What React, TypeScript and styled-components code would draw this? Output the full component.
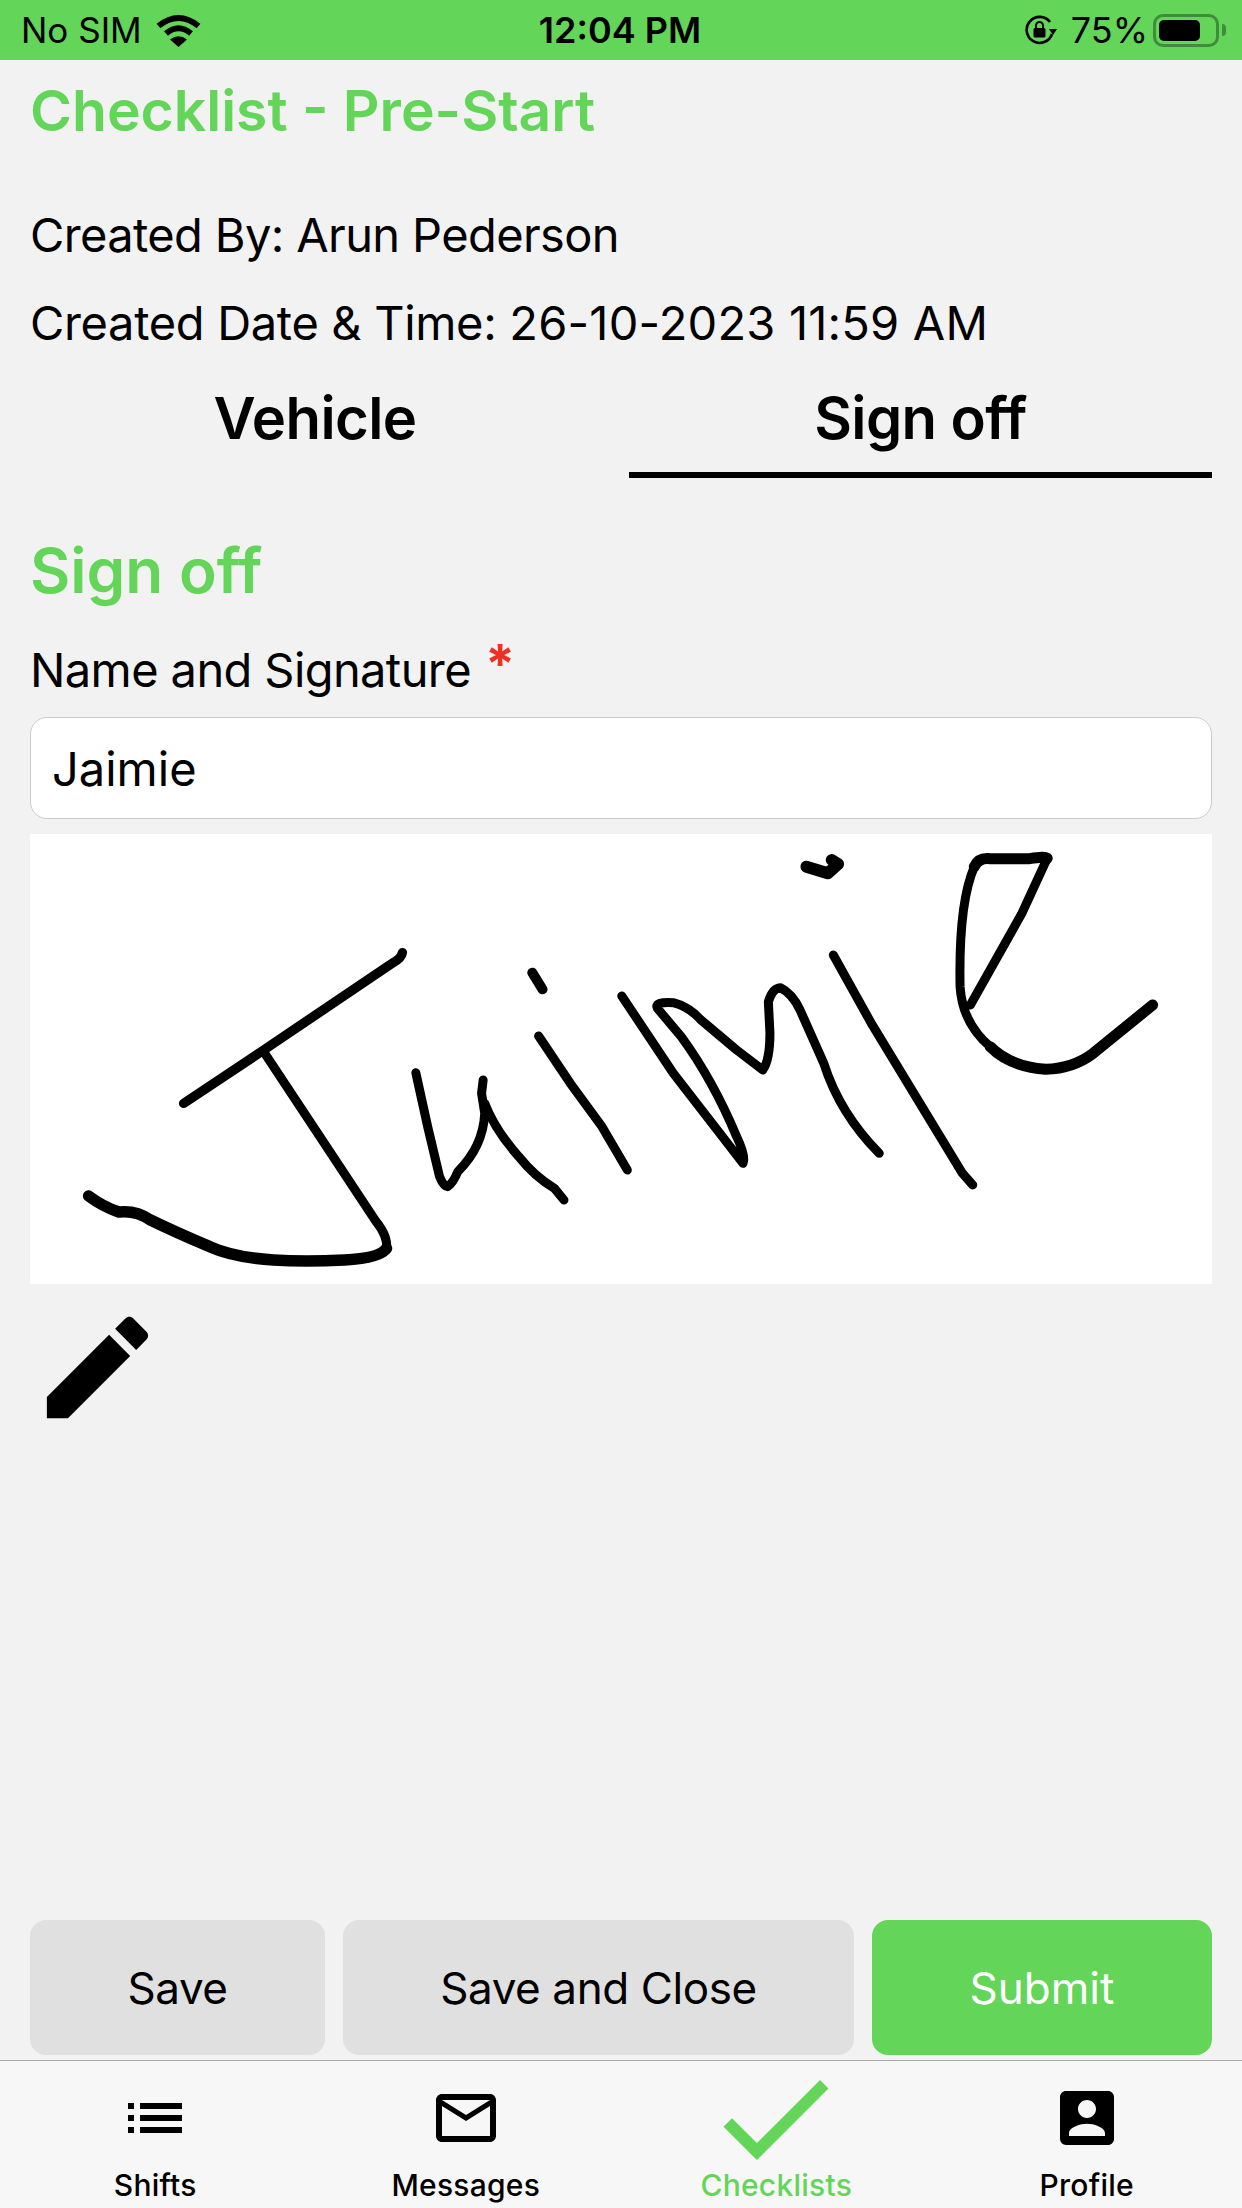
import React from 'react';
import styled, { createGlobalStyle } from 'styled-components';

const GREEN = '#63d558';

const GlobalStyle = createGlobalStyle`
    html, body {
        margin: 0;
        padding: 0;
        background: #f2f2f2;
    }
    * {
        box-sizing: border-box;
    }
`;

const Screen = styled.div`
    width: 1242px;
    height: 2208px;
    display: flex;
    flex-direction: column;
    overflow: hidden;
    background: #f2f2f2;
    color: #000;
    font-family: Inter, "Liberation Sans", sans-serif;
`;

const StatusBar = styled.div`
    height: 60px;
    flex: none;
    background: ${GREEN};
    display: grid;
    grid-template-columns: 1fr auto 1fr;
    align-items: center;
    padding: 0 23px 0 21px;
    font-size: 35px;
    line-height: 60px;
`;

const StatusLeft = styled.div`
    display: flex;
    align-items: center;
    gap: 14px;
`;

const StatusRight = styled.div`
    display: flex;
    align-items: center;
    justify-content: flex-end;
    gap: 5px;
    font-size: 36px;
`;

const Clock = styled.div`
    font-weight: 600;
    font-size: 36px;
`;

const LockSlot = styled.div`
    display: flex;
    margin-right: 9px;
`;

const Battery = styled.div`
    position: relative;
    width: 66px;
    height: 33px;
    border: 3px solid #3f8c3a;
    border-radius: 10px;
    padding: 3px;
    &::after {
        content: '';
        position: absolute;
        right: -10px;
        top: 7px;
        width: 4px;
        height: 12px;
        background: #3f8c3a;
        border-radius: 0 4px 4px 0;
    }
`;

const BatteryFill = styled.div`
    width: 41px;
    height: 21px;
    background: #000;
    border-radius: 5px;
`;

const Content = styled.div`
    flex: 1;
    display: flex;
    flex-direction: column;
    padding: 0 30px;
    min-height: 0;
`;

const Title = styled.h1`
    margin: 15px 0 0;
    font-size: 57px;
    line-height: 72px;
    font-weight: 600;
    color: ${GREEN};
`;

const MetaLine = styled.div<{ $top: number; $tracking: number }>`
    font-size: 47px;
    line-height: 60px;
    margin-top: ${(props) => props.$top}px;
    letter-spacing: ${(props) => props.$tracking}px;
`;

const DateValue = styled.span`
    letter-spacing: 0.2px;
`;

const Tabs = styled.div`
    display: grid;
    grid-template-columns: 570px 583px;
    gap: 29px;
    margin-top: 26px;
`;

const Tab = styled.div<{ $active?: boolean }>`
    height: 99px;
    text-align: center;
    font-size: 58px;
    line-height: 78px;
    font-weight: 600;
    letter-spacing: -0.6px;
    border-bottom: 6px solid ${(props) => (props.$active ? '#000' : 'transparent')};
`;

const SectionTitle = styled.h2`
    margin: 55px 0 0;
    font-size: 62px;
    line-height: 76px;
    font-weight: 600;
    color: ${GREEN};
`;

const FieldLabel = styled.div`
    margin-top: 32px;
    font-size: 47px;
    line-height: 58px;
    letter-spacing: -0.6px;
`;

const Required = styled.span`
    color: #ee3124;
    font-weight: 700;
    font-size: 54px;
    line-height: 0;
    margin-left: 14px;
    position: relative;
    top: -4px;
`;

const NameInput = styled.input`
    display: block;
    width: 100%;
    height: 102px;
    margin-top: 18px;
    padding: 0 21px;
    background: #fff;
    border: 1px solid #ccc;
    border-radius: 17px;
    color: #000;
    font-family: inherit;
    font-size: 47px;
    outline: none;
`;

const SignaturePanel = styled.div`
    height: 450px;
    margin-top: 15px;
    background: #fff;
`;

const SignatureSvg = styled.svg`
    display: block;
    width: 100%;
    height: 100%;
`;

const Ink = styled.path<{ $weight: number }>`
    fill: none;
    stroke: #000;
    stroke-width: ${(props) => props.$weight}px;
    stroke-linecap: round;
    stroke-linejoin: round;
    vector-effect: non-scaling-stroke;
`;

const EditIcon = styled.svg`
    display: block;
    width: 135px;
    height: 135px;
    margin-top: 16px;
    flex: none;
`;

const Actions = styled.div`
    margin-top: auto;
    margin-bottom: 5px;
    display: grid;
    grid-template-columns: 295px 511px 340px;
    gap: 18px;
`;

const ActionButton = styled.button<{ $primary?: boolean }>`
    height: 135px;
    border: none;
    border-radius: 16px;
    background: ${(props) => (props.$primary ? GREEN : '#e0e0e0')};
    color: ${(props) => (props.$primary ? '#fff' : '#000')};
    font-family: inherit;
    font-size: 44px;
    letter-spacing: ${(props) => (props.$primary ? '0' : '-0.4px')};
    padding: 0;
`;

const TabBar = styled.div`
    height: 148px;
    flex: none;
    display: grid;
    grid-template-columns: repeat(4, 1fr);
    background: #f7f7f7;
    border-top: 1px solid #a9a9a9;
`;

const NavItem = styled.div<{ $active?: boolean }>`
    display: flex;
    flex-direction: column;
    align-items: center;
    padding-top: 21px;
    color: ${(props) => (props.$active ? GREEN : '#000')};
`;

const IconSlot = styled.div`
    width: 72px;
    height: 72px;
    display: flex;
    align-items: center;
    justify-content: center;
`;

const NavIcon = styled.svg`
    display: block;
    width: 72px;
    height: 72px;
    flex: none;
    fill: currentColor;
`;

const CheckIcon = styled.svg`
    display: block;
    width: 106px;
    height: 80px;
    flex: none;
    margin-top: 4px;
    fill: currentColor;
`;

const NavLabel = styled.div`
    margin-top: 13px;
    font-size: 30px;
    line-height: 36px;
    font-weight: 500;
    letter-spacing: 0.25px;
`;

const navItems = [
    { label: 'Shifts', path: 'M3 13h2v-2H3v2zm0 4h2v-2H3v2zm0-8h2V7H3v2zm4 4h14v-2H7v2zm0 4h14v-2H7v2zM7 7v2h14V7H7z' },
    { label: 'Messages', path: 'M20 4H4c-1.1 0-2 .9-2 2v12c0 1.1.9 2 2 2h16c1.1 0 2-.9 2-2V6c0-1.1-.9-2-2-2zm0 14H4V8l8 5 8-5v10zm-8-7L4 6h16l-8 5z' },
    { label: 'Checklists', path: '' },
    { label: 'Profile', path: 'M3 5v14a2 2 0 002 2h14c1.1 0 2-.9 2-2V5c0-1.1-.9-2-2-2H5c-1.11 0-2 .9-2 2zm12 4c0 1.66-1.34 3-3 3s-3-1.34-3-3 1.34-3 3-3 3 1.34 3 3zm-9 8c0-2 4-3.1 6-3.1s6 1.1 6 3.1v1H6v-1z' },
];

// traced by hand over the signature, viewBox is stretched to fit the panel
const signatureStrokes = [
    { w: 9.5, d: 'M232 850 L330 695 L495 430 Q507 415 508 398' },
    { w: 9, d: 'M333 695 L475 1205 Q490 1250 488 1285' },
    { w: 11.5, d: 'M112 1128 Q130 1160 150 1176 Q172 1170 190 1200 Q225 1240 265 1280 Q295 1312 345 1320 Q385 1326 435 1320 Q480 1314 488 1285' },
    { w: 9, d: 'M525 758 L540 920 L555 1070 Q560 1100 565 1100 Q572 1090 578 1055 Q610 980 612 880 L608 820 L610 780' },
    { w: 9, d: 'M612 850 Q625 930 655 1010 Q675 1070 700 1105 L712 1140' },
    { w: 10, d: 'M672 458 L685 508' },
    { w: 9, d: 'M680 648 L720 790 L760 920 L792 1050' },
    { w: 9, d: 'M785 528 L850 760 L938 1030 Q942 1010 930 950 Q900 780 860 650 L830 565 Q825 545 850 548 Q870 560 885 600 L930 690 L963 750 Q972 720 972 640 L970 545 Q975 505 985 503 Q1000 520 1010 570 L1040 730 Q1060 880 1110 1000' },
    { w: 12, d: 'M1018 140 L1045 160 L1058 132 L1050 120' },
    { w: 9, d: 'M1052 405 L1100 610 L1215 1060 L1228 1095' },
    { w: 9, d: 'M1225 555 L1290 280 L1322 115' },
    { w: 11, d: 'M1322 115 Q1320 108 1300 116 L1250 116 Q1235 112 1230 140' },
    { w: 9, d: 'M1230 140 Q1210 250 1212 500 Q1215 610 1250 680' },
    { w: 11, d: 'M1250 680 Q1275 740 1320 748 Q1355 745 1380 700 L1455 555' },
];

const WifiIcon = () => (
    <svg width="45" height="33" viewBox="0 0 45 33">
        <path d="M2.5 12 Q22.5 -4 42.5 12" fill="none" stroke="#000" strokeWidth="6" />
        <path d="M10 19.5 Q22.5 9 35 19.5" fill="none" stroke="#000" strokeWidth="6" />
        <path d="M14 25.5 Q22.5 19 31 25.5 L22.5 33 Z" fill="#000" />
    </svg>
);

const RotationLockIcon = () => (
    <svg width="32" height="30" viewBox="0 0 32 30">
        <path d="M27 19 A13 13 0 1 1 25 7" fill="none" stroke="#000" strokeWidth="2.6" />
        <path d="M24 14 L32 14 L28 20 Z" fill="#000" />
        <rect x="8.5" y="13" width="12" height="9.5" rx="1.5" fill="#000" />
        <path d="M11 13 V10.5 a3.5 3.5 0 0 1 7 0 V13" fill="none" stroke="#000" strokeWidth="2" />
    </svg>
);

const App: React.FC = () => {
    return (
        <Screen>
            <GlobalStyle />
            <StatusBar>
                <StatusLeft>
                    <span>No SIM</span>
                    <WifiIcon />
                </StatusLeft>
                <Clock>12:04 PM</Clock>
                <StatusRight>
                    <LockSlot>
                        <RotationLockIcon />
                    </LockSlot>
                    <span>75%</span>
                    <Battery>
                        <BatteryFill />
                    </Battery>
                </StatusRight>
            </StatusBar>
            <Content>
                <Title>Checklist - Pre-Start</Title>
                <MetaLine $top={58} $tracking={-0.62}>Created By: Arun Pederson</MetaLine>
                <MetaLine $top={28} $tracking={-0.33}>
                    Created Date &amp; Time: <DateValue>26-10-2023 11:59 AM</DateValue>
                </MetaLine>
                <Tabs>
                    <Tab>Vehicle</Tab>
                    <Tab $active>Sign off</Tab>
                </Tabs>
                <SectionTitle>Sign off</SectionTitle>
                <FieldLabel>
                    Name and Signature<Required>*</Required>
                </FieldLabel>
                <NameInput defaultValue="Jaimie" />
                <SignaturePanel>
                    <SignatureSvg viewBox="38 42 1492 1350" preserveAspectRatio="none">
                        {signatureStrokes.map((stroke) => (
                            <Ink key={stroke.d} d={stroke.d} $weight={stroke.w} />
                        ))}
                    </SignatureSvg>
                </SignaturePanel>
                <EditIcon viewBox="0 0 24 24">
                    <path d="M3 17.25V21h3.75L17.81 9.94l-3.75-3.75L3 17.25zM20.71 7.04c.39-.39.39-1.02 0-1.41l-2.34-2.34c-.39-.39-1.02-.39-1.41 0l-1.83 1.83 3.75 3.75 1.83-1.83z" />
                </EditIcon>
                <Actions>
                    <ActionButton>Save</ActionButton>
                    <ActionButton>Save and Close</ActionButton>
                    <ActionButton $primary>Submit</ActionButton>
                </Actions>
            </Content>
            <TabBar>
                {navItems.map((item) => (
                    <NavItem key={item.label} $active={item.label === 'Checklists'}>
                        <IconSlot>
                            {item.path ? (
                                <NavIcon viewBox="0 0 24 24">
                                    <path d={item.path} />
                                </NavIcon>
                            ) : (
                                <CheckIcon viewBox="3.41 5.59 17.59 13.41">
                                    <path d="M9 16.17L4.83 12l-1.42 1.41L9 19 21 7l-1.41-1.41z" />
                                </CheckIcon>
                            )}
                        </IconSlot>
                        <NavLabel>{item.label}</NavLabel>
                    </NavItem>
                ))}
            </TabBar>
        </Screen>
    );
};

export default App;
